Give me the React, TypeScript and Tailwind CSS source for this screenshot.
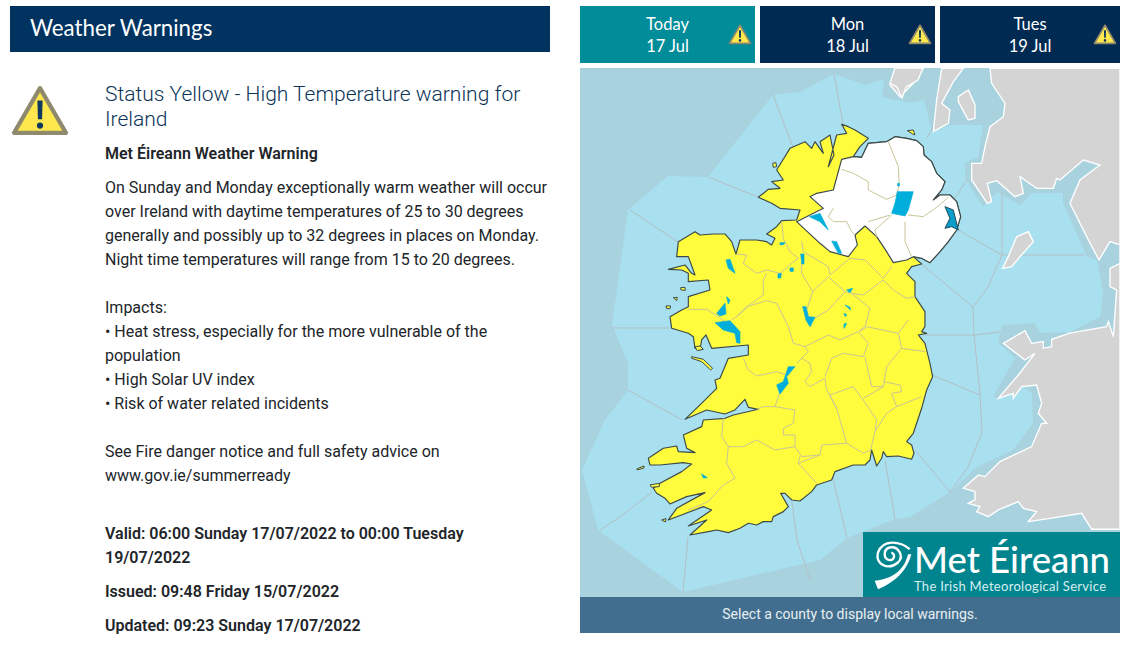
const island =
  "665,43 685,50 705,60 745,85 720,110 700,140 725,142 745,100 800,95 825,80 860,85 890,92 910,110 912,135 935,155 950,190 975,215 965,240 940,270 960,255 990,255 1010,275 1022,320 1010,360 985,395 960,425 930,458 905,445 880,440 905,462 875,470 860,490 885,515 885,560 915,605 915,650 905,665 920,670 895,675 915,700 930,760 938,800 920,840 905,895 880,970 860,995 875,1005 882,1030 875,1048 835,1038 800,1040 790,1025 785,1045 770,1068 755,1020 750,1050 735,1065 700,1065 645,1085 635,1110 590,1125 575,1145 540,1173 515,1170 495,1150 482,1150 505,1190 490,1205 460,1220 455,1235 430,1235 410,1245 385,1240 360,1255 325,1268 290,1260 265,1265 210,1275 260,1230 205,1248 275,1200 250,1190 145,1230 170,1195 255,1148 200,1160 150,1182 135,1165 110,1150 100,1135 120,1120 185,1085 215,1062 190,1058 120,1065 90,1065 85,1045 130,1015 170,1008 175,1025 225,1028 200,1015 190,975 245,950 250,930 315,925 340,915 415,898 385,892 375,868 345,900 315,912 260,900 195,928 250,875 290,835 285,810 300,805 325,745 385,735 385,705 275,715 258,675 245,690 240,720 225,715 220,680 205,670 155,655 150,620 185,600 205,590 205,560 270,540 265,510 205,515 205,490 185,480 145,478 195,465 215,490 225,495 205,440 170,440 175,395 200,380 225,365 240,375 280,372 315,372 335,395 348,432 360,390 410,390 440,395 455,405 465,385 440,372 470,350 485,332 530,330 540,300 480,295 455,280 415,262 445,238 480,235 455,215 490,210 470,180 510,115 555,95 575,115 585,95 610,130 600,95 630,75 642,135 625,170 650,75 680,70";

const northernIreland =
  "700,140 725,142 745,100 800,95 825,80 860,85 890,92 910,110 912,135 935,155 950,190 975,215 965,240 940,270 960,255 990,255 1010,275 1022,320 1010,360 985,395 960,425 930,458 905,445 880,440 860,450 820,458 800,425 770,380 735,348 705,375 712,405 685,440 630,425 600,400 530,335 610,295 570,260 590,250 640,240 665,148";

const countyLines = [
  "665,178 700,190 745,215 745,240 800,268 830,255 838,225 835,170 805,95",
  "865,315 910,320 950,292 985,262",
  "855,335 855,395 875,440",
  "815,315 765,360 770,380",
  "640,295 625,320 640,335 680,335 695,365 705,375",
  "745,335 810,315",
  "485,335 490,385 510,425 535,445 515,460 480,490 440,480 410,490 370,460 380,435 350,432",
  "440,490 430,510 430,555 395,580 350,620 335,630",
  "350,620 380,590 440,572 470,580 505,650 520,700 555,710",
  "205,598 260,598 295,620 335,650",
  "545,395 550,425 625,470 630,495 690,445 735,450 790,505 815,470",
  "625,500 578,545 545,490 545,455",
  "578,545 560,600 575,650",
  "625,500 675,545 625,600 575,630",
  "675,545 695,550 730,555 790,510 820,540 860,565 885,560",
  "695,550 750,595 735,650 715,665",
  "555,710 565,725 530,760",
  "545,745 570,760 575,785 555,815 570,830 615,805 620,840 650,895 680,1000",
  "680,1000 605,1005 600,1035 545,1040 525,1010 525,975 490,975 490,955 520,940 525,900 465,890 430,890 410,898",
  "465,890 475,860 490,820",
  "500,795 470,785 410,798 385,780 370,745",
  "555,710 625,675 660,690 715,665 745,700 730,740 670,730 635,745 615,800",
  "735,740 755,830 790,830 800,770 845,715 915,725",
  "720,665 740,650 835,670 865,630",
  "845,715 835,670",
  "790,815 840,825 845,845 815,850 830,890 905,860",
  "730,870 770,930 765,965 752,1020",
  "730,870 700,830 630,855 650,895",
  "790,830 730,865",
  "830,890 800,910 765,965",
  "310,925 305,980 325,1010 370,1010 410,990 465,1020 525,1010",
  "540,1040 535,1060 590,1120",
  "535,1060 600,1035",
  "325,1010 320,1060 345,1105 310,1125 265,1175 205,1200",
  "680,1000 730,1030 752,1020",
];

const lakes = [
  "832,245 880,245 865,300 855,318 815,310 825,280",
  "833,220 838,220 838,228 833,228",
  "568,320 600,310 625,360 600,335",
  "635,393 650,395 665,430 655,430",
  "318,450 330,448 345,490 325,475",
  "290,610 315,580 318,612 300,618",
  "320,560 330,570 325,582",
  "285,638 330,632 360,665 360,700 350,698 345,670 310,660",
  "505,770 525,770 500,800 505,820 480,852 470,825 490,815",
  "548,590 558,590 565,620 585,622 570,650 558,630",
  "480,398 495,398 490,404 480,404",
  "542,432 552,432 552,462 546,462",
  "510,474 520,474 520,484 510,484",
  "474,492 484,490 482,504 474,504",
  "680,540 698,535 690,548",
  "675,585 690,592 692,600",
  "672,610 680,614 676,620",
  "672,642 680,640 672,655",
  "245,1092 262,1103 250,1104",
];

const islands = [
  "458,160 468,158 470,170 460,172",
  "862,62 880,60 885,75 878,72",
  "182,533 195,532 196,541 183,540",
  "160,563 172,562 170,572",
  "138,588 152,588 150,596 140,596",
  "215,740 250,748 278,775 272,780 245,755 215,745",
  "50,1077 72,1068 72,1074 52,1080",
  "90,1125 118,1120 118,1130 95,1132",
  "125,1230 138,1226 136,1236",
  "225,710 240,708 250,718 232,722",
];

const seaLines = [
  "773,95 793,147",
  "834,74 843,124",
  "708,177 758,197",
  "630,210 678,242",
  "612,328 670,328",
  "628,390 682,420",
  "652,492 620,517 600,530",
  "688,537 683,592",
  "792,502 797,540 810,580",
  "833,478 847,538",
  "885,460 895,519",
  "915,450 950,492",
  "927,138 940,115",
  "967,180 955,198",
  "958,230 1002,255",
  "1002,193 1002,255 1085,255",
  "1002,255 988,287 973,307",
  "913,257 973,307 974,335 980,393 982,432 968,467 950,492",
  "925,335 974,335 1000,332",
  "932,375 980,395",
];

const seaArea =
  "628,210 668,176 708,177 773,95 800,92 834,74 866,85 884,79 882,97 910,103 924,100 932,132 950,125 983,125 978,157 965,163 965,178 983,207 997,192 1020,205 1032,193 1063,193 1063,203 1087,257 1097,260 1103,293 1100,317 1070,332 1040,333 1035,323 1002,325 998,343 1015,358 993,397 997,398 1023,387 1032,393 1033,423 1013,450 977,467 950,492 910,517 895,519 847,538 820,560 683,592 598,530 582,470 605,420 628,390 628,363 612,325";

const mainland =
  "270,25 275,70 315,130 310,170 270,200 255,260 245,310 215,310 215,360 262,430 275,425 262,370 290,362 345,410 370,400 360,350 410,385 460,385 470,355 480,360 550,300 600,315 540,360 510,430 560,530 597,600 630,545 660,555 660,610 630,625 630,680 650,690 640,830 625,785 620,800 505,820 495,825 455,838 455,860 430,865 430,845 395,850 375,812 310,850 375,900 405,880 355,945 295,1015 340,1000 340,1015 365,980 410,975 425,1030 415,1060 440,1090 425,1090 395,1160 300,1205 255,1250 235,1245 190,1285 225,1295 225,1320 205,1330 240,1340 230,1355 265,1370 295,1350 355,1325 370,1345 410,1355 385,1385 450,1375 545,1360 575,1408 660,1408 660,25";

const otherLand = [
  "385,515 400,545 360,590 335,620 308,625 325,590 350,530",
  "175,110 205,90 225,135 225,175 205,180 175,125",
  "125,25 190,25 160,65 125,130 150,150 145,190 100,215 110,120",
  "-30,75 -15,25 70,25 40,70 0,110",
];

function WarningIcon({ className }: { className: string }) {
  return (
    <svg viewBox="0 0 56 50" className={className}>
      <path d="M28 3 L53 46 L3 46 Z" fill="#ffe84d" stroke="#8f8a6e" strokeWidth="4" strokeLinejoin="round" />
      <path d="M25.5 15 H30.5 L30 33 H26 Z" fill="#0f3a5f" />
      <circle cx="28" cy="39" r="3" fill="#0f3a5f" />
    </svg>
  );
}

function DayTab({ day, date, active, width }: { day: string; date: string; active?: boolean; width: string }) {
  return (
    <div className={`relative flex h-[57px] flex-col items-center justify-center font-['Lato',sans-serif] text-[16.5px] leading-[22px] text-white ${width} ${active ? "bg-[#008c99]" : "bg-[#002a52]"}`}>
      <span>{day}</span>
      <span>{date}</span>
      <WarningIcon className="absolute right-[3px] top-[18px] h-[21px] w-[24px]" />
    </div>
  );
}

function IrelandMap() {
  return (
    <svg viewBox="580 68 540 529" className="block h-full w-full">
      <rect x="580" y="68" width="540" height="529" fill="#a9d2df" />
      <polygon points={seaArea} fill="#a8e0ef" />
      <g fill="none" stroke="#b4bfc4" strokeWidth="1">
        {seaLines.map((p) => (
          <polyline key={p} points={p} />
        ))}
      </g>
      <g transform="translate(900 60) scale(0.3333)" fill="#d4d4d4" stroke="#ffffff" strokeWidth="4">
        <polygon points={mainland} />
        {otherLand.map((p) => (
          <polygon key={p} points={p} />
        ))}
      </g>
      <polygon points="890,83 895,68 923,68 918,80 906,87 902,98 897,87" fill="#d4d4d4" stroke="#ffffff" strokeWidth="1.3" />
      <g transform="translate(620 110) scale(0.3333)">
        <polygon points={island} fill="#fffb3d" stroke="#3c4a4a" strokeWidth="3.5" strokeLinejoin="round" />
        <polygon points={northernIreland} fill="#ffffff" stroke="#3c4a4a" strokeWidth="3.5" strokeLinejoin="round" />
        {islands.map((p) => (
          <polygon key={p} points={p} fill="#fffb3d" stroke="#3c4a4a" strokeWidth="3" />
        ))}
        <g fill="none" stroke="#c9c596" strokeWidth="3" strokeLinejoin="round">
          {countyLines.map((p) => (
            <polyline key={p} points={p} />
          ))}
        </g>
        {lakes.map((p) => (
          <polygon key={p} points={p} fill="#00aedb" stroke="#00aedb" strokeWidth="2" strokeLinejoin="round" />
        ))}
        <polygon points="975,290 1000,300 1015,360 995,350 975,355 990,325" fill="#0a9ec9" stroke="#1d4a5a" strokeWidth="3" />
      </g>
    </svg>
  );
}

function MetLogo() {
  return (
    <div className="absolute bottom-0 right-0 flex h-[65px] w-[257px] bg-[#00858f] text-white">
      <svg viewBox="70 55 120 155" className="ml-[10px] mt-[7px] h-[52px] w-[40px] shrink-0">
        <path d="M180 85 C150 60 100 55 85 95 C75 130 115 150 145 125 C165 105 145 75 120 80 C100 85 100 115 120 118 C135 118 138 100 125 95" fill="none" stroke="#ffffff" strokeWidth="7" />
        <path d="M175 100 C165 140 140 172 75 180 L85 205 C120 190 170 160 185 100 Z" fill="#ffffff" />
      </svg>
      <div className="ml-[1px] flex flex-col font-['Lato',sans-serif]">
        <span className="mt-[6px] text-[36.5px] font-medium leading-[42px] whitespace-nowrap">Met Éireann</span>
        <span className="mt-[-2px] text-[13px] leading-[16px] whitespace-nowrap tracking-[0.3px] text-[#d5eef0]">The Irish Meteorological Service</span>
      </div>
    </div>
  );
}

export default function App() {
  return (
    <div className="flex h-[665px] w-[1131px] gap-[30px] overflow-hidden bg-white pl-[10px] pt-[6px] font-['Roboto',sans-serif]">
      <div className="w-[540px]">
        <h1 className="flex h-[46px] items-center bg-[#00335f] pb-[2px] pl-[20px] font-['Lato',sans-serif] text-[22.3px] font-normal text-white">
          Weather Warnings
        </h1>
        <div className="flex pt-[30px]">
          <div className="w-[95px] shrink-0">
            <WarningIcon className="mt-[3px] h-[52px] w-[60px]" />
          </div>
          <div className="w-[445px] text-[16px] leading-[24px] text-[#212529]">
            <h2 className="text-[21px] font-light leading-[25px] text-[#0b3458]">
              Status Yellow - High Temperature warning for Ireland
            </h2>
            <p className="mt-[10px] font-semibold">Met Éireann Weather Warning</p>
            <p className="mt-[10px]">
              On Sunday and Monday exceptionally warm weather will occur over Ireland with daytime temperatures of 25 to 30 degrees generally and possibly up to 32 degrees in places on Monday. Night time temperatures will range from 15 to 20 degrees.
              <br />
              <br />
              Impacts:
              <br />• Heat stress, especially for the more vulnerable of the population
              <br />• High Solar UV index
              <br />• Risk of water related incidents
              <br />
              <br />
              See Fire danger notice and full safety advice on www.gov.ie/summerready
            </p>
            <p className="mt-[34px] font-semibold">Valid: 06:00 Sunday 17/07/2022 to 00:00 Tuesday 19/07/2022</p>
            <p className="mt-[10px] font-semibold">Issued: 09:48 Friday 15/07/2022</p>
            <p className="mt-[10px] font-semibold">Updated: 09:23 Sunday 17/07/2022</p>
          </div>
        </div>
      </div>
      <div className="w-[540px]">
        <div className="flex gap-[5px]">
          <DayTab day="Today" date="17 Jul" active width="w-[175px]" />
          <DayTab day="Mon" date="18 Jul" width="w-[175px]" />
          <DayTab day="Tues" date="19 Jul" width="w-[180px]" />
        </div>
        <div className="relative mt-[5px] h-[529px]">
          <IrelandMap />
          <MetLogo />
        </div>
        <div className="flex h-[36px] items-center justify-center bg-[#416e8e] pb-[2px] text-[14px] text-[#e8eef2]">
          Select a county to display local warnings.
        </div>
      </div>
    </div>
  );
}
